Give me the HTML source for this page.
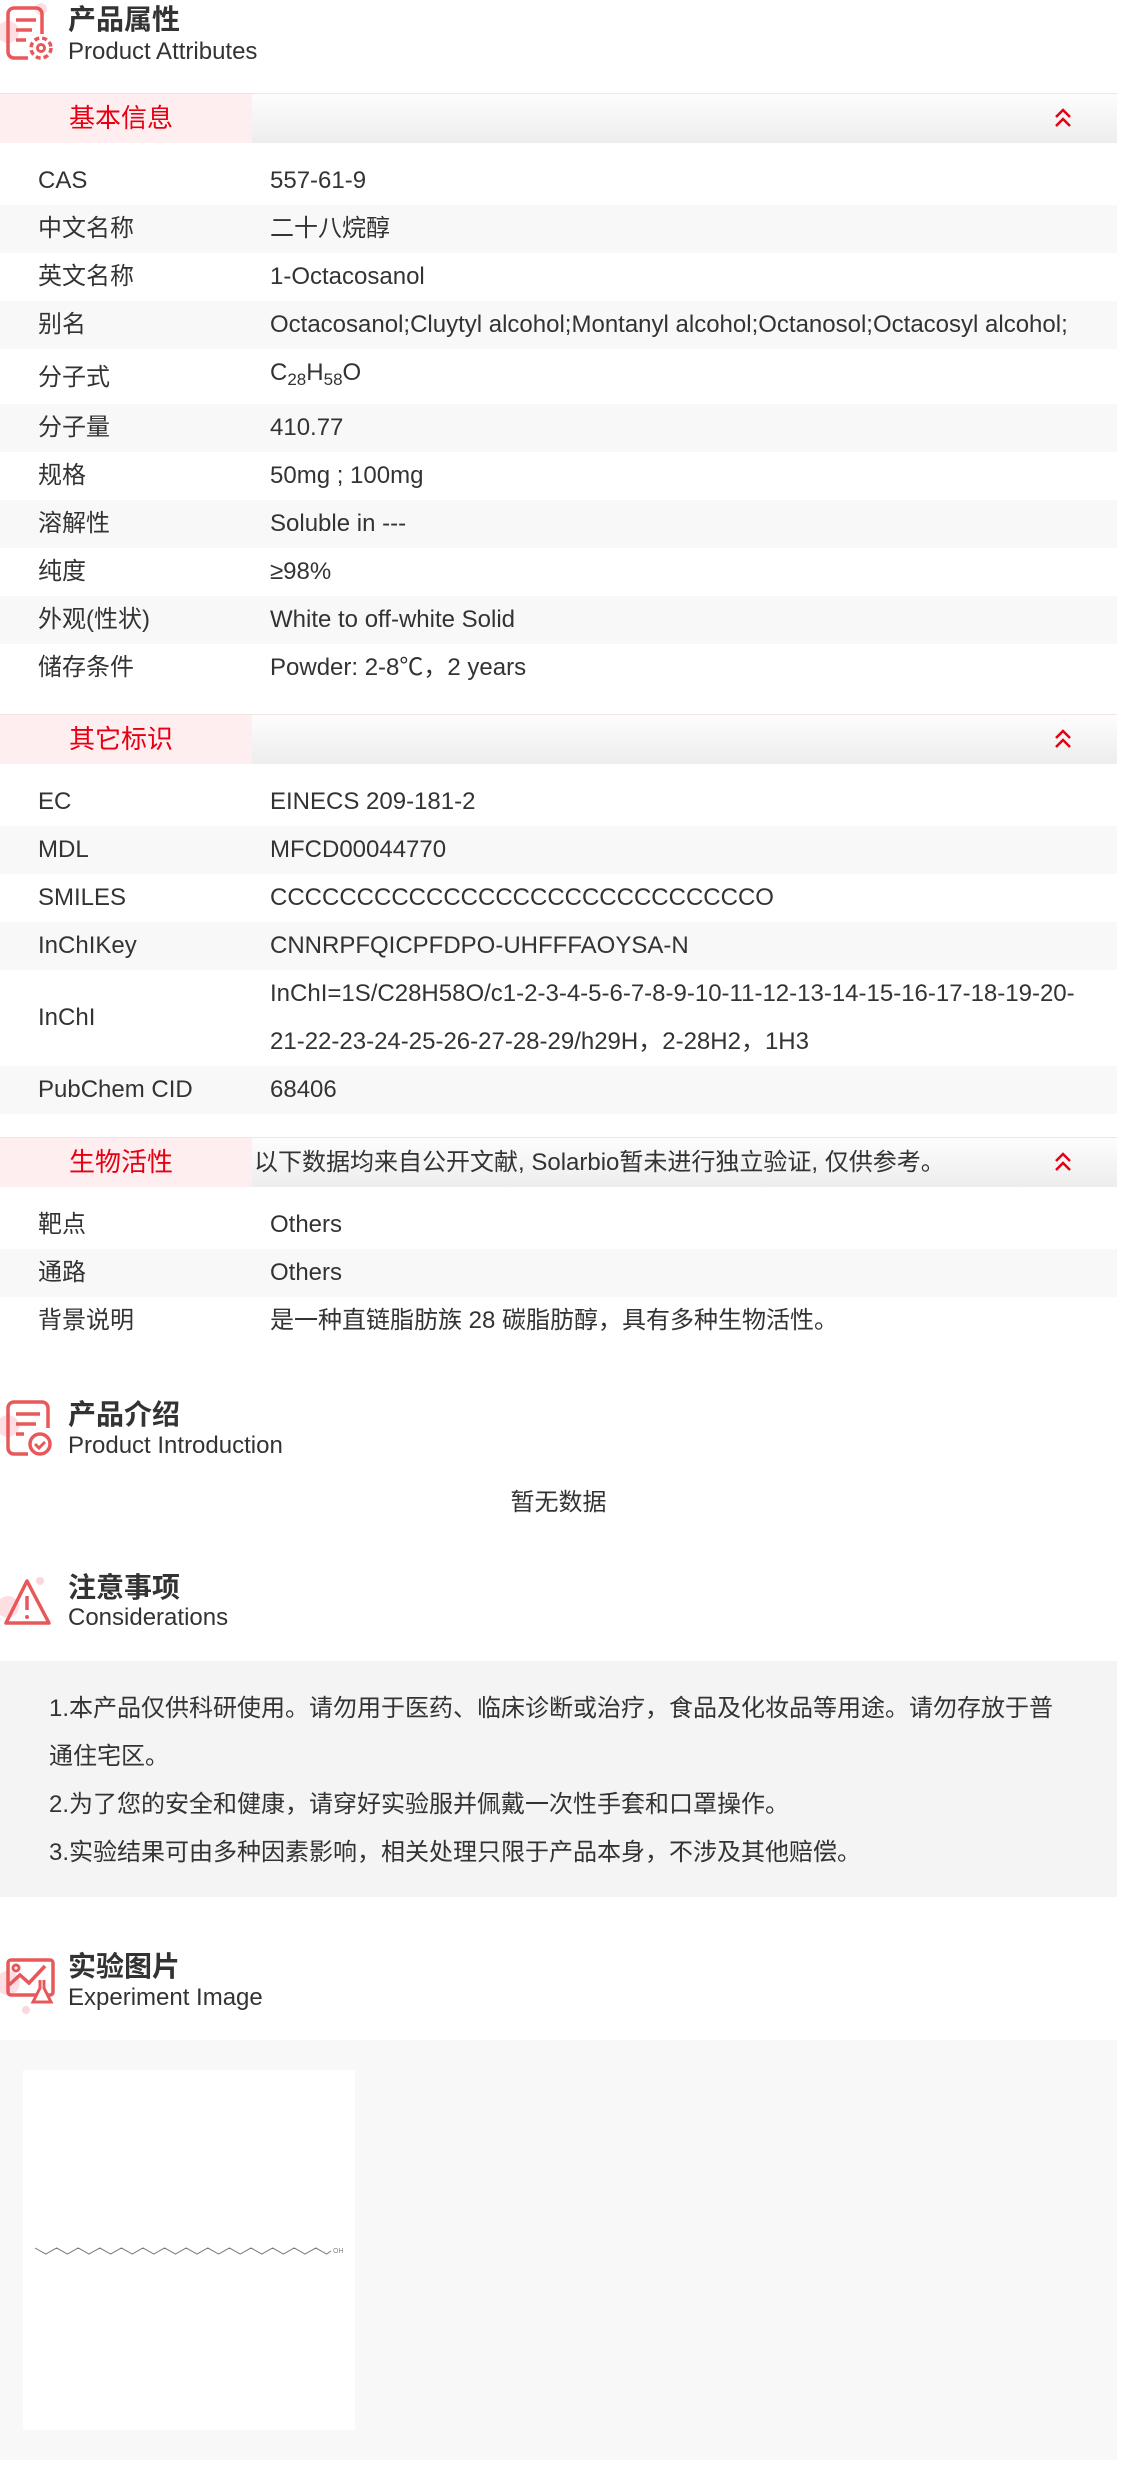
<!DOCTYPE html>
<html><head><meta charset="utf-8">
<style>
*{margin:0;padding:0;box-sizing:border-box}
body{width:1130px;height:2473px;background:#fff;font-family:"Liberation Sans","Noto Sans CJK SC",sans-serif;color:#333;position:relative;overflow:hidden}
.abs{position:absolute}
.h1{position:absolute;left:68px;font-size:28px;font-weight:bold;color:#333;line-height:34px}
.h2{position:absolute;left:68px;font-size:24px;color:#333;line-height:28px}
.bar{position:absolute;left:0;width:1117px;height:50px;border-top:1px solid #f3e3e3;background:linear-gradient(#fdfdfd,#ededed)}
.bar .t{position:absolute;left:0;top:0;width:252px;height:49px;background:#ffeef0;color:#e60012;font-size:26px;line-height:49px;padding-left:69px}
.bar .n{position:absolute;left:254px;top:0;line-height:49px;font-size:24px;color:#333}
.bar svg{position:absolute;left:1054px;top:14px}
.tbl{position:absolute;left:0;width:1117px}
.r{height:48px;line-height:48px;font-size:24px;position:relative;white-space:nowrap}
.r:nth-child(even){background:#f8f8f8}
.r .l{position:absolute;left:38px;top:0}
.r .v{position:absolute;left:270px;top:0}
sub{font-size:17px;vertical-align:-5px;line-height:0}
</style></head><body>

<svg class="abs" style="left:0;top:0" width="60" height="64" viewBox="0 0 60 64">
<circle cx="8" cy="32" r="11" fill="#fbd6dc" opacity=".8"/><circle cx="41" cy="9" r="6" fill="#fbd6dc" opacity=".8"/>
<path d="M42 34V14a6 6 0 0 0-6-6H14a6 6 0 0 0-6 6v38a6 6 0 0 0 6 6h14" fill="none" stroke="#e8585a" stroke-width="3.5"/>
<path d="M16 20h20M16 30h16M16 40h10" stroke="#e8585a" stroke-width="3.5"/>
<circle cx="41" cy="48" r="10" fill="#fff" stroke="#e8585a" stroke-width="3.5" stroke-dasharray="5 3"/>
<circle cx="41" cy="48" r="3.5" fill="none" stroke="#e8585a" stroke-width="3"/>
</svg>
<div class="h1" style="top:3px">产品属性</div>
<div class="h2" style="top:38px">Product Attributes</div>

<div class="bar" style="top:93px"><div class="t">基本信息</div>
<svg width="18" height="20" viewBox="0 0 18 20"><path d="M2 9l7-7 7 7M2 18l7-7 7 7" fill="none" stroke="#e60012" stroke-width="2.5"/></svg></div>

<div class="tbl" style="top:157px">
<div class="r"><span class="l">CAS</span><span class="v">557-61-9</span></div>
<div class="r"><span class="l">中文名称</span><span class="v">二十八烷醇</span></div>
<div class="r"><span class="l">英文名称</span><span class="v">1-Octacosanol</span></div>
<div class="r"><span class="l">别名</span><span class="v">Octacosanol;Cluytyl alcohol;Montanyl alcohol;Octanosol;Octacosyl alcohol;</span></div>
<div class="r" style="height:55px;background:#fff"><span class="l" style="top:5px">分子式</span><span class="v">C<sub>28</sub>H<sub>58</sub>O</span></div>
<div class="r" style="background:#f8f8f8"><span class="l">分子量</span><span class="v">410.77</span></div>
<div class="r" style="background:#fff"><span class="l">规格</span><span class="v">50mg ; 100mg</span></div>
<div class="r" style="background:#f8f8f8"><span class="l">溶解性</span><span class="v">Soluble in ---</span></div>
<div class="r" style="background:#fff"><span class="l">纯度</span><span class="v">≥98%</span></div>
<div class="r" style="background:#f8f8f8"><span class="l">外观(性状)</span><span class="v">White to off-white Solid</span></div>
<div class="r" style="background:#fff"><span class="l">储存条件</span><span class="v">Powder: 2-8℃，2 years</span></div>
</div>

<div class="bar" style="top:714px"><div class="t">其它标识</div>
<svg width="18" height="20" viewBox="0 0 18 20"><path d="M2 9l7-7 7 7M2 18l7-7 7 7" fill="none" stroke="#e60012" stroke-width="2.5"/></svg></div>

<div class="tbl" style="top:778px">
<div class="r" style="background:#fff"><span class="l">EC</span><span class="v">EINECS 209-181-2</span></div>
<div class="r" style="background:#f8f8f8"><span class="l">MDL</span><span class="v">MFCD00044770</span></div>
<div class="r" style="background:#fff"><span class="l">SMILES</span><span class="v">CCCCCCCCCCCCCCCCCCCCCCCCCCCCO</span></div>
<div class="r" style="background:#f8f8f8"><span class="l">InChIKey</span><span class="v">CNNRPFQICPFDPO-UHFFFAOYSA-N</span></div>
<div class="r" style="height:96px;background:#fff"><span class="l" style="top:24px">InChI</span><span class="v">InChI=1S/C28H58O/c1-2-3-4-5-6-7-8-9-10-11-12-13-14-15-16-17-18-19-20-<br>21-22-23-24-25-26-27-28-29/h29H，2-28H2，1H3</span></div>
<div class="r" style="background:#f8f8f8"><span class="l">PubChem CID</span><span class="v">68406</span></div>
</div>

<div class="bar" style="top:1137px"><div class="t">生物活性</div><div class="n">以下数据均来自公开文献, Solarbio暂未进行独立验证, 仅供参考。</div>
<svg width="18" height="20" viewBox="0 0 18 20"><path d="M2 9l7-7 7 7M2 18l7-7 7 7" fill="none" stroke="#e60012" stroke-width="2.5"/></svg></div>

<div class="tbl" style="top:1201px">
<div class="r" style="background:#fff"><span class="l">靶点</span><span class="v">Others</span></div>
<div class="r" style="background:#f8f8f8"><span class="l">通路</span><span class="v">Others</span></div>
<div class="r" style="background:#fff"><span class="l">背景说明</span><span class="v">是一种直链脂肪族 28 碳脂肪醇，具有多种生物活性。</span></div>
</div>

<svg class="abs" style="left:0;top:1396px" width="60" height="64" viewBox="0 0 60 64">
<circle cx="8" cy="30" r="11" fill="#fbd6dc" opacity=".8"/>
<path d="M48 32V12a6 6 0 0 0-6-6H14a6 6 0 0 0-6 6v40a6 6 0 0 0 6 6h14" fill="none" stroke="#e8585a" stroke-width="3.5"/>
<path d="M16 18h24M16 28h20M16 38h8" stroke="#e8585a" stroke-width="3.5"/>
<circle cx="40" cy="48" r="10" fill="#fff" stroke="#e8585a" stroke-width="3.5"/>
<path d="M35 48l4 4 6-6" fill="none" stroke="#e8585a" stroke-width="3"/>
</svg>
<div class="h1" style="top:1398px">产品介绍</div>
<div class="h2" style="top:1432px">Product Introduction</div>
<div class="abs" style="left:0;width:1117px;top:1489px;text-align:center;font-size:24px;line-height:28px">暂无数据</div>

<svg class="abs" style="left:0;top:1572px" width="60" height="60" viewBox="0 0 60 60">
<circle cx="8" cy="35" r="11" fill="#fbd6dc" opacity=".8"/><circle cx="40" cy="9" r="4" fill="#fbd6dc"/>
<path d="M27 9L6 51h43z" fill="none" stroke="#e8585a" stroke-width="3.5" stroke-linejoin="round"/>
<path d="M27 24v14" stroke="#e8585a" stroke-width="3.5"/><circle cx="27" cy="45" r="2" fill="#e8585a"/>
</svg>
<div class="h1" style="top:1571px">注意事项</div>
<div class="h2" style="top:1604px">Considerations</div>
<div class="abs" style="left:0;top:1661px;width:1117px;height:236px;background:#f4f4f4;padding:24px 49px 0 49px;font-size:24px;line-height:48px;color:#333">
1.本产品仅供科研使用。请勿用于医药、临床诊断或治疗，食品及化妆品等用途。请勿存放于普通住宅区。<br>2.为了您的安全和健康，请穿好实验服并佩戴一次性手套和口罩操作。<br>3.实验结果可由多种因素影响，相关处理只限于产品本身，不涉及其他赔偿。
</div>

<svg class="abs" style="left:0;top:1955px" width="60" height="60" viewBox="0 0 60 60">
<circle cx="8" cy="28" r="12" fill="#fbd6dc" opacity=".8"/><circle cx="26" cy="55" r="4" fill="#fbd6dc"/>
<rect x="8" y="5" width="45" height="35" rx="3" fill="none" stroke="#e8585a" stroke-width="3.5"/>
<circle cx="16" cy="13" r="3" fill="none" stroke="#e8585a" stroke-width="3"/>
<path d="M9 30l11-10 9 8 16-17" fill="none" stroke="#e8585a" stroke-width="3.5"/>
<path d="M40 25v8l-7 14h18l-7-14v-8" fill="#fff" stroke="#e8585a" stroke-width="3"/>
</svg>
<div class="h1" style="top:1950px">实验图片</div>
<div class="h2" style="top:1984px">Experiment Image</div>
<div class="abs" style="left:0;top:2040px;width:1117px;height:420px;background:#f8f8f8"></div>
<svg class="abs" style="left:23px;top:2070px" width="332" height="360" viewBox="0 0 332 360">
<rect width="332" height="360" fill="#fff"/>
<polyline fill="none" stroke="#777" stroke-width="1" points="12,178 22.8,184 33.6,178 44.4,184 55.2,178 66,184 76.8,178 87.6,184 98.4,178 109.2,184 120,178 130.8,184 141.6,178 152.4,184 163.2,178 174,184 184.8,178 195.6,184 206.4,178 217.2,184 228,178 238.8,184 249.6,178 260.4,184 271.2,178 282,184 292.8,178 303.6,184 308,181"/>
<text x="310" y="183" font-size="7" fill="#888" font-family="Liberation Sans, sans-serif">OH</text>
</svg>
</body></html>
